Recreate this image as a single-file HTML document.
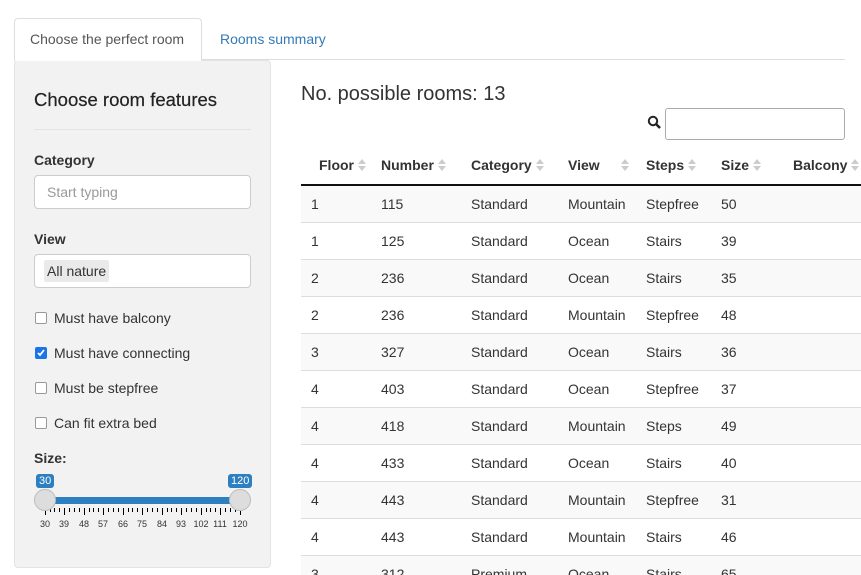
<!DOCTYPE html>
<html style="overflow:hidden;height:575px"><head><meta charset="utf-8"><style>
*{box-sizing:border-box}
body{margin:0;width:861px;height:575px;overflow:hidden;background:#fff;font-family:"Liberation Sans",Arial,sans-serif;color:#333;font-size:14px;position:relative}
.a{position:absolute;white-space:nowrap}
.cb{position:absolute;left:35px;width:12px;height:12px;border:1px solid #999;border-radius:2px;background:#fff}
.lbl{font-weight:bold}
.wrap{position:absolute;left:301px;top:145px;width:560px;height:430px;overflow:hidden}
table{border-collapse:collapse;width:600px;font-size:14px}
th{text-align:left;font-weight:bold;height:40px;border-bottom:2px solid #111;padding:0}
td{height:37px;border-top:1px solid #ddd;padding:0}
tr.s td{background:#f9f9f9}
.so{display:inline-block;width:8px;position:relative;height:14px;vertical-align:-2px;margin-left:4px}
.so:before{content:"";position:absolute;left:0;top:1px;border:4px solid transparent;border-top:0;border-bottom:5px solid #ccc}
.so:after{content:"";position:absolute;left:0;top:8px;border:4px solid transparent;border-bottom:0;border-top:5px solid #ccc}
</style></head><body>
<div class="a" style="left:14px;top:18px;width:188px;height:43px;border:1px solid #ddd;border-bottom:none;border-radius:4px 4px 0 0;background:#fff;z-index:2"></div>
<div class="a" style="left:14px;top:59px;width:831px;height:1px;background:#ddd"></div>
<div class="a" style="left:30px;top:31px;color:#555;z-index:3">Choose the perfect room</div>
<div class="a" style="left:220px;top:31px;color:#337ab7">Rooms summary</div>
<div class="a" style="left:14px;top:60px;width:257px;height:508px;background:#f2f2f2;border:1px solid #e3e3e3;border-radius:4px"></div>
<div class="a" style="left:34px;top:89px;font-size:18.5px;color:#222;-webkit-text-stroke:0.2px #222">Choose room features</div>
<div class="a" style="left:34px;top:129px;width:217px;height:1px;background:#e3e3e3"></div>
<div class="a lbl" style="left:34px;top:152px">Category</div>
<div class="a" style="left:34px;top:175px;width:217px;height:34px;border:1px solid #ccc;border-radius:4px;background:#fff;color:#999;padding:8px 12px">Start typing</div>
<div class="a lbl" style="left:34px;top:231px">View</div>
<div class="a" style="left:34px;top:254px;width:217px;height:34px;border:1px solid #ccc;border-radius:4px;background:#fff"></div>
<div class="a" style="left:44px;top:260px;background:#eaeaea;padding:3px 3px;border-radius:2px">All nature</div>
<div class="cb" style="top:312px"></div><div class="a" style="left:54px;top:310px">Must have balcony</div>
<div class="cb" style="top:347px;background:#1a73e8;border-color:#1a73e8"><svg width="10" height="10" style="position:absolute;left:0;top:0"><path d="M2 5l2 2 4-5" stroke="#fff" stroke-width="1.8" fill="none"/></svg></div><div class="a" style="left:54px;top:345px">Must have connecting</div>
<div class="cb" style="top:382px"></div><div class="a" style="left:54px;top:380px">Must be stepfree</div>
<div class="cb" style="top:417px"></div><div class="a" style="left:54px;top:415px">Can fit extra bed</div>
<div class="a lbl" style="left:34px;top:450px">Size:</div>
<div class="a" style="left:36px;top:474px;background:#2c7fc0;color:#fff;font-size:11px;padding:1px 3px;border-radius:3px">30</div>
<div class="a" style="left:228px;top:474px;background:#2c7fc0;color:#fff;font-size:11px;padding:1px 3px;border-radius:3px">120</div>
<div class="a" style="left:45px;top:497px;width:195px;height:7px;background:#2c7fc0"></div>
<svg class="a" style="left:30px;top:505px" width="230" height="30">
<g stroke="#000" stroke-width="1">
<line x1="15.5" y1="3" x2="15.5" y2="10"/><line x1="34.5" y1="3" x2="34.5" y2="10"/><line x1="54.5" y1="3" x2="54.5" y2="10"/><line x1="73.5" y1="3" x2="73.5" y2="10"/><line x1="93.5" y1="3" x2="93.5" y2="10"/><line x1="112.5" y1="3" x2="112.5" y2="10"/><line x1="132.5" y1="3" x2="132.5" y2="10"/><line x1="151.5" y1="3" x2="151.5" y2="10"/><line x1="171.5" y1="3" x2="171.5" y2="10"/><line x1="190.5" y1="3" x2="190.5" y2="10"/><line x1="210.5" y1="3" x2="210.5" y2="10"/>
<line x1="20.5" y1="3" x2="20.5" y2="7"/><line x1="24.5" y1="3" x2="24.5" y2="7"/><line x1="29.5" y1="3" x2="29.5" y2="7"/><line x1="39.5" y1="3" x2="39.5" y2="7"/><line x1="44.5" y1="3" x2="44.5" y2="7"/><line x1="49.5" y1="3" x2="49.5" y2="7"/><line x1="59.5" y1="3" x2="59.5" y2="7"/><line x1="63.5" y1="3" x2="63.5" y2="7"/><line x1="68.5" y1="3" x2="68.5" y2="7"/><line x1="78.5" y1="3" x2="78.5" y2="7"/><line x1="83.5" y1="3" x2="83.5" y2="7"/><line x1="88.5" y1="3" x2="88.5" y2="7"/><line x1="98.5" y1="3" x2="98.5" y2="7"/><line x1="102.5" y1="3" x2="102.5" y2="7"/><line x1="107.5" y1="3" x2="107.5" y2="7"/><line x1="117.5" y1="3" x2="117.5" y2="7"/><line x1="122.5" y1="3" x2="122.5" y2="7"/><line x1="127.5" y1="3" x2="127.5" y2="7"/><line x1="137.5" y1="3" x2="137.5" y2="7"/><line x1="141.5" y1="3" x2="141.5" y2="7"/><line x1="146.5" y1="3" x2="146.5" y2="7"/><line x1="156.5" y1="3" x2="156.5" y2="7"/><line x1="161.5" y1="3" x2="161.5" y2="7"/><line x1="166.5" y1="3" x2="166.5" y2="7"/><line x1="176.5" y1="3" x2="176.5" y2="7"/><line x1="180.5" y1="3" x2="180.5" y2="7"/><line x1="185.5" y1="3" x2="185.5" y2="7"/><line x1="195.5" y1="3" x2="195.5" y2="7"/><line x1="200.5" y1="3" x2="200.5" y2="7"/><line x1="205.5" y1="3" x2="205.5" y2="7"/>
</g>
<g font-size="9" fill="#333" text-anchor="middle" font-family="Liberation Sans">
<text x="15" y="22">30</text><text x="34" y="22">39</text><text x="54" y="22">48</text><text x="73" y="22">57</text><text x="93" y="22">66</text><text x="112" y="22">75</text><text x="132" y="22">84</text><text x="151" y="22">93</text><text x="171" y="22">102</text><text x="190" y="22">111</text><text x="210" y="22">120</text></g></svg>
<div class="a" style="left:34px;top:489px;width:22px;height:22px;border-radius:50%;background:#ddd;border:1px solid #bbb"></div>
<div class="a" style="left:229px;top:489px;width:22px;height:22px;border-radius:50%;background:#ddd;border:1px solid #bbb"></div>
<div class="a" style="left:301px;top:83px;font-size:20px;color:#333">No. possible rooms: 13</div>
<svg class="a" style="left:647px;top:115px" width="16" height="16"><circle cx="6" cy="6" r="4.2" stroke="#222" stroke-width="2" fill="none"/><line x1="9" y1="9" x2="13" y2="13" stroke="#222" stroke-width="2.5"/></svg>
<div class="a" style="left:665px;top:108px;width:180px;height:32px;border:1px solid #aaa;border-radius:3px"></div>
<div class="wrap"><table>
<tr><th style="padding-left:18px;width:80px">Floor<span class="so"></span></th><th style="width:90px">Number<span class="so"></span></th><th style="width:97px">Category<span class="so"></span></th><th style="width:78px">View<span class="so" style="margin-left:21px"></span></th><th style="width:75px">Steps<span class="so"></span></th><th style="width:72px">Size<span class="so"></span></th><th>Balcony<span class="so"></span></th></tr>
<tr class="s"><td style="padding-left:10px">1</td><td>115</td><td>Standard</td><td>Mountain</td><td>Stepfree</td><td>50</td><td></td></tr>
<tr><td style="padding-left:10px">1</td><td>125</td><td>Standard</td><td>Ocean</td><td>Stairs</td><td>39</td><td></td></tr>
<tr class="s"><td style="padding-left:10px">2</td><td>236</td><td>Standard</td><td>Ocean</td><td>Stairs</td><td>35</td><td></td></tr>
<tr><td style="padding-left:10px">2</td><td>236</td><td>Standard</td><td>Mountain</td><td>Stepfree</td><td>48</td><td></td></tr>
<tr class="s"><td style="padding-left:10px">3</td><td>327</td><td>Standard</td><td>Ocean</td><td>Stairs</td><td>36</td><td></td></tr>
<tr><td style="padding-left:10px">4</td><td>403</td><td>Standard</td><td>Ocean</td><td>Stepfree</td><td>37</td><td></td></tr>
<tr class="s"><td style="padding-left:10px">4</td><td>418</td><td>Standard</td><td>Mountain</td><td>Steps</td><td>49</td><td></td></tr>
<tr><td style="padding-left:10px">4</td><td>433</td><td>Standard</td><td>Ocean</td><td>Stairs</td><td>40</td><td></td></tr>
<tr class="s"><td style="padding-left:10px">4</td><td>443</td><td>Standard</td><td>Mountain</td><td>Stepfree</td><td>31</td><td></td></tr>
<tr><td style="padding-left:10px">4</td><td>443</td><td>Standard</td><td>Mountain</td><td>Stairs</td><td>46</td><td></td></tr>
<tr class="s"><td style="padding-left:10px">3</td><td>312</td><td>Premium</td><td>Ocean</td><td>Stairs</td><td>65</td><td></td></tr>
</table></div>
</body></html>
